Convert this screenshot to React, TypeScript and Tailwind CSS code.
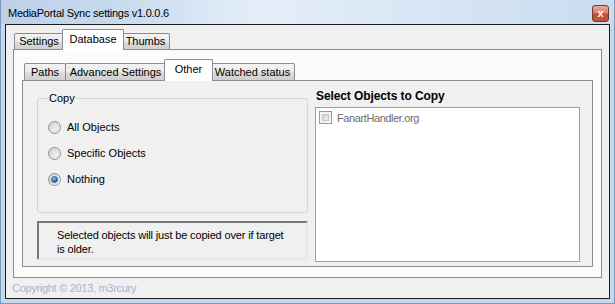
import React from "react";

const FONT = { fontFamily: '"Liberation Sans", Arial, sans-serif' };

function Radio({ checked }: { checked?: boolean }) {
  return (
    <svg width="13" height="13" viewBox="0 0 13 13" className="shrink-0">
      <defs>
        <linearGradient id="rg" x1="0" y1="0" x2="1" y2="1">
          <stop offset="0" stopColor="#d0d0d0" />
          <stop offset="1" stopColor="#ffffff" />
        </linearGradient>
        <radialGradient id="rb" cx="0.4" cy="0.35" r="0.7">
          <stop offset="0" stopColor="#8fd0ff" />
          <stop offset="0.6" stopColor="#2a78c0" />
          <stop offset="1" stopColor="#0f3f7a" />
        </radialGradient>
      </defs>
      <circle cx="6.5" cy="6.5" r="6" fill="url(#rg)" stroke="#8e8f8f" strokeWidth="1" />
      <circle cx="6.5" cy="6.5" r="4.3" fill="none" stroke="#d8d8d8" strokeWidth="1" />
      {checked && <circle cx="6.5" cy="6.5" r="3" fill="url(#rb)" stroke="#1b4f8a" strokeWidth="0.6" />}
    </svg>
  );
}

function Checkbox() {
  return (
    <div className="w-[13px] h-[13px] border border-[#9a9a9a] bg-[#f4f4f4] p-[2px] shrink-0">
      <div className="w-full h-full border border-[#c8c8c8] bg-[linear-gradient(135deg,#cfcfcf,#efefef)]" />
    </div>
  );
}

function Tab({ label, selected, h, w }: { label: string; selected?: boolean; h: string; w: string }) {
  if (selected) {
    return (
      <div
        className={`${w} ${h} -mx-[2px] -mb-px relative z-10 bg-white border border-b-0 border-[#898c95] rounded-t-[2px] flex items-start justify-center pt-[3px] text-[11px] leading-[13px] text-black`}
      >
        {label}
      </div>
    );
  }
  return (
    <div
      className={`${w} ${h} -ml-px first:ml-0 border border-b-0 border-[#898c95] rounded-t-[2px] bg-[linear-gradient(180deg,#f3f3f3_0%,#ebebeb_50%,#dcdcdc_51%,#cfcfcf_100%)] flex items-center justify-center text-[11px] leading-[13px] text-black`}
    >
      {label}
    </div>
  );
}

export default function App() {
  return (
    <div
      className="w-[615px] h-[304px] overflow-hidden flex flex-col bg-[#c4d8ee] border-x border-b border-[#7f9bbb]"
      style={FONT}
    >
      {/* Title bar */}
      <div className="h-[24px] shrink-0 flex items-start justify-between pl-[7px] pr-[5px] bg-[linear-gradient(90deg,#bcd1e9_0%,#c6d9ee_18%,#e4eef9_42%,#dbe8f6_62%,#c9dcf0_100%)]">
        <span className="mt-[6px] text-[11px] leading-[14px] text-black tracking-[-0.25px]">
          MediaPortal Sync settings v1.0.0.6
        </span>
        <div className="mt-[5px] w-[17px] h-[17px] rounded-[3px] border border-[#6e3a30] bg-[linear-gradient(180deg,#eaa999_0%,#dc8068_45%,#c84a30_55%,#c0573e_100%)] flex items-center justify-center text-white text-[11px] font-bold leading-none">
          x
        </div>
      </div>

      {/* Client area */}
      <div className="mx-[4px] h-[275px] border border-[#1b1b1b] bg-[#f0f0f0] flex flex-col">
        <div className="pt-[4px] px-[7px]">
          {/* Outer tabs */}
          <div className="h-[20px] flex items-end pl-[1px]">
            <Tab label="Settings" w="w-[50px]" h="h-[16px]" />
            <Tab label="Database" w="w-[62px]" h="h-[21px]" selected />
            <Tab label="Thumbs" w="w-[49px]" h="h-[16px]" />
          </div>
          {/* Outer panel */}
          <div className="h-[229px] border border-[#898c95] bg-[#fbfbfb] px-[8px] pt-[9px]">
            {/* Inner tabs */}
            <div className="h-[21px] flex items-end pl-[2px]">
              <Tab label="Paths" w="w-[42px]" h="h-[17px]" />
              <Tab label="Advanced Settings" w="w-[101px]" h="h-[17px]" />
              <Tab label="Other" w="w-[49px]" h="h-[22px]" selected />
              <Tab label="Watched status" w="w-[85px]" h="h-[17px]" />
            </div>
            {/* Inner panel */}
            <div className="h-[187px] border border-[#898c95] bg-[#f0f0f0] pl-[14px] pr-[12px] flex gap-[7px]">
              {/* Left column */}
              <div className="w-[271px] flex flex-col">
                <fieldset className="mt-[10px] h-[122px] border border-[#d5d5d5] rounded-[3px] px-[10px] flex flex-col">
                  <legend className="px-[1px] text-[11px] leading-[14px] text-black">Copy</legend>
                  <div className="pt-[9px] flex flex-col">
                    {[
                      { l: "All Objects", c: false },
                      { l: "Specific Objects", c: false },
                      { l: "Nothing", c: true },
                    ].map((r) => (
                      <div key={r.l} className="h-[26px] flex items-center gap-[6px]">
                        <Radio checked={r.c} />
                        <span className="text-[11px] leading-[14px] text-black">{r.l}</span>
                      </div>
                    ))}
                  </div>
                </fieldset>
                <div className="mt-[8px] h-[39px] border-2 border-t-[#777777] border-l-[#777777] border-r-[#e8e8e8] border-b-[#e8e8e8] pl-[18px] pt-[5px] text-[11px] leading-[14px] tracking-[-0.15px] text-black">
                  Selected objects will just be copied over if target
                  <br />
                  is older.
                </div>
              </div>
              {/* Right column */}
              <div className="flex-1 flex flex-col">
                <div className="mt-[8px] pl-[1px] h-[14px] text-[12px] leading-[14px] font-bold tracking-[-0.1px] text-black">
                  Select Objects to Copy
                </div>
                <div className="mt-[4px] h-[155px] border border-[#a0a0a0] bg-white pl-[3px] pt-[3px]">
                  <div className="flex items-center gap-[5px] h-[13px]">
                    <Checkbox />
                    <span className="text-[11px] leading-[14px] tracking-[-0.4px] text-[#6d6d6d]">FanartHandler.org</span>
                  </div>
                </div>
              </div>
            </div>
          </div>
        </div>
        {/* Copyright */}
        <div className="h-[20px] flex items-center pl-[6px] text-[11px] tracking-[-0.3px] text-[#a3b6ce]">
          Copyright © 2013, m3rcury
        </div>
      </div>
    </div>
  );
}
